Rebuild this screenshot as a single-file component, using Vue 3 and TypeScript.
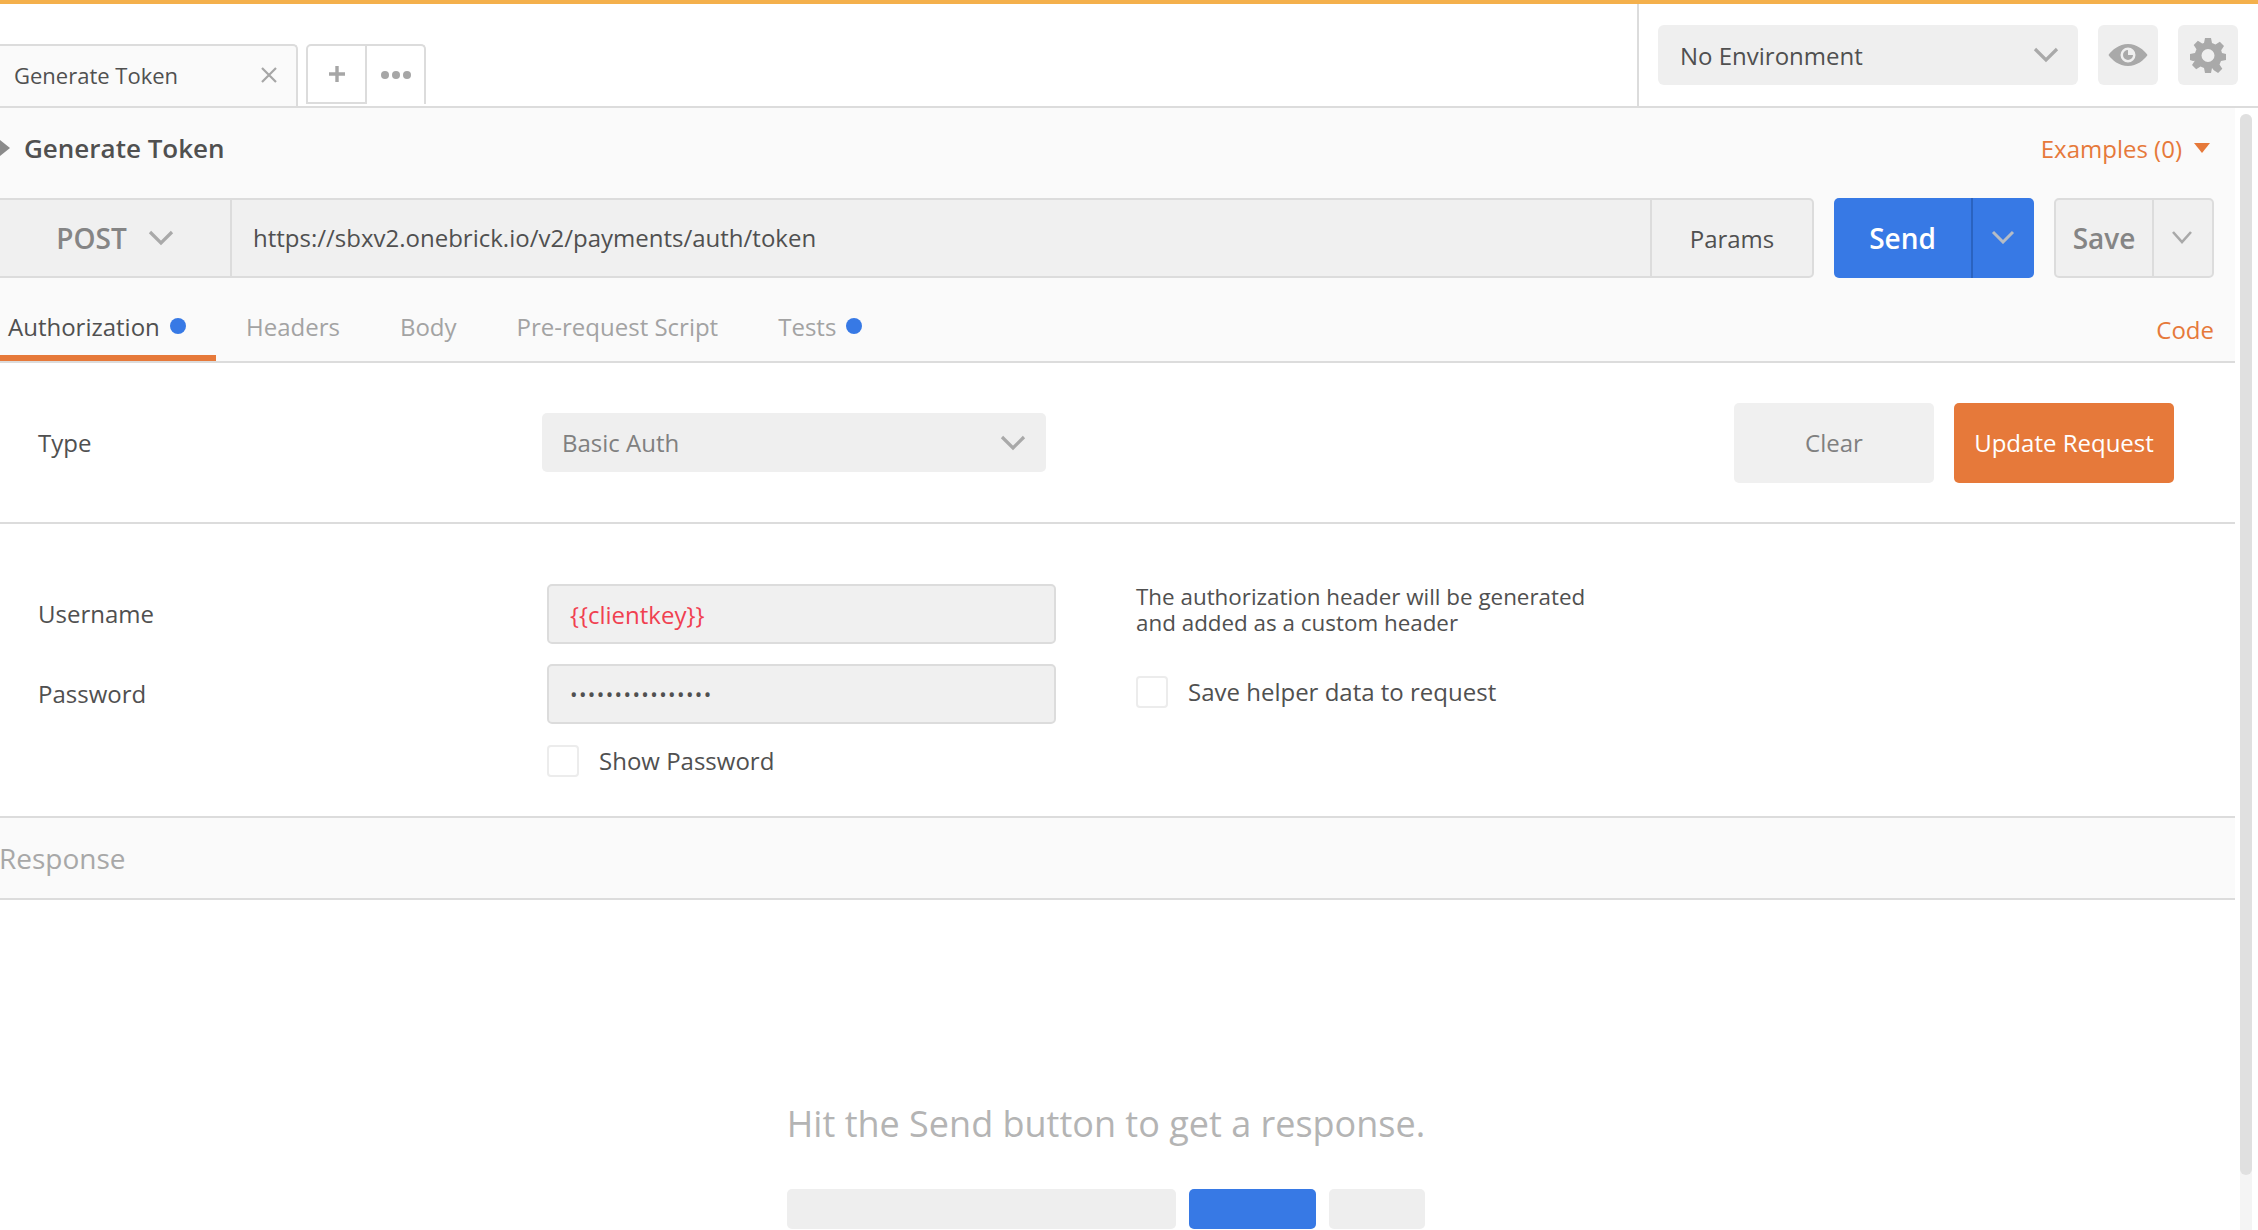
<script setup lang="ts">
const tabs = [
  { label: 'Authorization', dot: true, active: true },
  { label: 'Headers', dot: false, active: false },
  { label: 'Body', dot: false, active: false },
  { label: 'Pre-request Script', dot: false, active: false },
  { label: 'Tests', dot: true, active: false },
]
</script>

<template>
  <div class="app">
    <header class="header">
      <div class="tabstrip">
        <div class="tab">
          <span>Generate Token</span>
          <svg class="x" width="18" height="18" viewBox="0 0 18 18"><path d="M2 2l14 14M16 2L2 16" stroke="#a6a6a6" stroke-width="2.2" fill="none" /></svg>
        </div>
        <div class="tabbtns">
          <button class="tabbtn plus">
            <svg width="18" height="18" viewBox="0 0 18 18"><path d="M9 1v16M1 9h16" stroke="#a6a6a6" stroke-width="3.4" fill="none" /></svg>
          </button>
          <button class="tabbtn">
            <svg width="32" height="10" viewBox="0 0 32 10"><circle cx="5" cy="5" r="4" fill="#a6a6a6" /><circle cx="16" cy="5" r="4" fill="#a6a6a6" /><circle cx="27" cy="5" r="4" fill="#a6a6a6" /></svg>
          </button>
        </div>
      </div>
      <div class="envbar">
        <div class="env">
          <span>No Environment</span>
          <svg width="26" height="16" viewBox="0 0 26 16"><path d="M2 2l11 11L24 2" stroke="#a9a9a9" stroke-width="3.2" fill="none" /></svg>
        </div>
        <div class="iconbtn">
          <svg width="40" height="24" viewBox="0 0 40 24">
            <path fill-rule="evenodd" fill="#a9a9a9" d="M20 1C11 1 4 7 0.5 12 4 17 11 23 20 23s16-6 19.500-11C36 7 29 1 20 1zm0 3.500a7.500 7.500 0 1 1 0 15 7.500 7.500 0 0 1 0-15z" />
            <path fill-rule="evenodd" fill="#a9a9a9" d="M20 7a5 5 0 1 0 5 5h-5z" />
          </svg>
        </div>
        <div class="iconbtn">
          <svg width="36" height="36" viewBox="0 0 36 36">
            <path fill="#a9a9a9" fill-rule="evenodd" d="M15 1h6l1 5 3.500 1.500 4.300-2.800 4.200 4.200-2.800 4.300L32 16l4 1v6l-5 1-1.500 3.500 2.800 4.300-4.200 4.200-4.300-2.800L22 31l-1 5h-6l-1-5-3.500-1.500-4.300 2.800-4.200-4.200 2.800-4.300L3 24l-3-1v-6l5-1 1.500-3.800-2.800-4.300 4.200-4.200 4.300 2.800L14 6zM18 12a6.500 6.500 0 1 0 0 13 6.500 6.500 0 0 0 0-13z" />
          </svg>
        </div>
      </div>
    </header>

    <div class="body">
      <main class="content">
        <section class="request">
          <div class="namerow">
            <div class="name">
              <svg width="10" height="16" viewBox="0 0 10 16"><path d="M0 0l10 8-10 8z" fill="#8a8a8a" /></svg>
              <span>Generate Token</span>
            </div>
            <div class="examples">
              <span>Examples (0)</span>
              <svg width="16" height="10" viewBox="0 0 16 10"><path d="M0 0h16L8 10z" fill="#e6793a" /></svg>
            </div>
          </div>

          <div class="urlrow">
            <div class="urlgroup">
              <div class="method">
                <span>POST</span>
                <svg width="26" height="16" viewBox="0 0 26 16"><path d="M2 2l11 11L24 2" stroke="#a9a9a9" stroke-width="3.2" fill="none" /></svg>
              </div>
              <div class="url">https://sbxv2.onebrick.io/v2/payments/auth/token</div>
              <div class="params">Params</div>
            </div>
            <div class="send">
              <span class="sendmain">Send</span>
              <span class="sendcaret">
                <svg width="24" height="14" viewBox="0 0 24 14"><path d="M2 2l10 10L22 2" stroke="#b5bcc6" stroke-width="3" fill="none" /></svg>
              </span>
            </div>
            <div class="save">
              <span class="savemain">Save</span>
              <span class="savecaret">
                <svg width="22" height="14" viewBox="0 0 22 14"><path d="M2 2l9 10 9-10" stroke="#a9a9a9" stroke-width="2.600" fill="none" /></svg>
              </span>
            </div>
          </div>

          <nav class="reqtabs">
            <div v-for="t in tabs" :key="t.label" class="reqtab" :class="{ active: t.active }">
              <span>{{ t.label }}</span>
              <i v-if="t.dot" class="dot"></i>
            </div>
            <div class="code">Code</div>
          </nav>
        </section>

        <section class="typerow">
          <div class="label">Type</div>
          <div class="typeselect">
            <span>Basic Auth</span>
            <svg width="26" height="16" viewBox="0 0 26 16"><path d="M2 2l11 11L24 2" stroke="#a9a9a9" stroke-width="3.2" fill="none" /></svg>
          </div>
          <div class="actions">
            <div class="clear">Clear</div>
            <div class="update">Update Request</div>
          </div>
        </section>

        <section class="authform">
          <div class="labels">
            <div class="label fieldlabel">Username</div>
            <div class="label fieldlabel">Password</div>
          </div>
          <div class="fields">
            <div class="input var">{{ '\u007B\u007Bclientkey\u007D\u007D' }}</div>
            <div class="input pass">••••••••••••••••</div>
            <div class="check"><i class="box"></i><span>Show Password</span></div>
          </div>
          <div class="helper">
            <p>The authorization header will be generated<br />and added as a custom header</p>
            <div class="check"><i class="box"></i><span>Save helper data to request</span></div>
          </div>
        </section>

        <section class="resphead"><span>Response</span></section>

        <section class="respbody">
          <div class="hint">Hit the Send button to get a response.</div>
          <div class="skeleton">
            <i class="sk a"></i>
            <i class="sk b"></i>
            <i class="sk c"></i>
          </div>
        </section>
      </main>
      <aside class="gutter"><div class="track"><div class="thumb"></div></div></aside>
    </div>
  </div>
</template>

<style>
html, body { margin: 0; background: #fff; }
</style>

<style scoped>
.app {
  width: 2258px;
  height: 1230px;
  overflow: hidden;
  box-sizing: border-box;
  border-top: 4px solid #f4b04c;
  background: #fff;
  font-family: "Open Sans", "Liberation Sans", sans-serif;
  color: #505050;
  display: flex;
  flex-direction: column;
}
.header {
  height: 104px;
  box-sizing: border-box;
  border-bottom: 2px solid #dcdcdc;
  display: flex;
  flex: none;
}
.tabstrip {
  width: 1637px;
  flex: none;
  display: flex;
  align-items: flex-start;
  padding-top: 40px;
  box-sizing: border-box;
}
.tab {
  width: 298px;
  height: 62px;
  box-sizing: border-box;
  border: 2px solid #dcdcdc;
  border-left: 0;
  border-bottom: 0;
  border-radius: 0 5px 0 0;
  background: #fafafa;
  display: flex;
  align-items: center;
  justify-content: space-between;
  padding: 0 18px 2px 14px;
  font-size: 22px;
}
.tabbtns {
  margin-left: 8px;
  display: flex;
  height: 60px;
}
.tabbtn {
  box-sizing: border-box;
  width: 59px;
  height: 60px;
  padding: 0;
  background: #fff;
  border: 2px solid #dcdcdc;
  border-bottom: 0;
  border-left: 0;
  border-radius: 0 5px 0 0;
  display: flex;
  align-items: center;
  justify-content: center;
}
.tabbtn.plus {
  width: 61px;
  border-left: 2px solid #dcdcdc;
  border-bottom: 2px solid #dcdcdc;
  border-radius: 5px 0 0 0;
}
.envbar {
  flex: 1;
  border-left: 2px solid #dcdcdc;
  display: flex;
  gap: 20px;
  padding: 21px 0 0 19px;
  box-sizing: border-box;
}
.env {
  width: 420px;
  height: 60px;
  box-sizing: border-box;
  background: #efefef;
  border-radius: 6px;
  display: flex;
  align-items: center;
  justify-content: space-between;
  padding: 0 19px 0 22px;
  font-size: 24px;
}
.iconbtn {
  width: 60px;
  height: 60px;
  background: #efefef;
  border-radius: 6px;
  display: flex;
  align-items: center;
  justify-content: center;
}
.body {
  flex: 1;
  display: flex;
  min-height: 0;
}
.content {
  width: 2235px;
  flex: none;
  display: flex;
  flex-direction: column;
}
.gutter {
  flex: 1;
  padding: 6px 6px 0 5px;
  display: flex;
}
.track {
  flex: 1;
  background: #f4f4f4;
  border-radius: 6px 6px 0 0;
}
.thumb {
  background: #e0e0e0;
  border-radius: 6px;
  height: 1061px;
}
.request {
  background: #fafafa;
  border-bottom: 2px solid #dcdcdc;
  flex: none;
}
.namerow {
  height: 90px;
  box-sizing: border-box;
  padding: 0 25px 10px 0;
  display: flex;
  align-items: center;
  justify-content: space-between;
}
.name {
  display: flex;
  align-items: center;
  gap: 14px;
  font-size: 26px;
  font-weight: 600;
  color: #505050;
}
.examples {
  display: flex;
  align-items: center;
  gap: 12px;
  color: #e6793a;
  font-size: 24px;
}
.urlrow {
  display: flex;
  height: 80px;
  padding-right: 21px;
}
.urlgroup {
  flex: 1;
  display: flex;
  box-sizing: border-box;
  border: 2px solid #dcdcdc;
  border-left: 0;
  border-radius: 0 5px 5px 0;
  background: #f0f0f0;
  margin-right: 20px;
}
.method {
  width: 232px;
  box-sizing: border-box;
  border-right: 2px solid #dcdcdc;
  display: flex;
  align-items: center;
  justify-content: center;
  gap: 21px;
  font-size: 28px;
  font-weight: 600;
  color: #858585;
}
.url {
  flex: 1;
  display: flex;
  align-items: center;
  padding: 0 0 2px 21px;
  font-size: 24px;
}
.params {
  width: 162px;
  box-sizing: border-box;
  border-left: 2px solid #dcdcdc;
  display: flex;
  align-items: center;
  justify-content: center;
  font-size: 24px;
}
.send {
  width: 200px;
  display: flex;
  background: #3779e5;
  border-radius: 5px;
  color: #fff;
  font-size: 28px;
  font-weight: 600;
  margin-right: 20px;
}
.sendmain {
  width: 139px;
  display: flex;
  align-items: center;
  justify-content: center;
  box-sizing: border-box;
  border-right: 2px solid #2a63c0;
}
.sendcaret {
  flex: 1;
  display: flex;
  align-items: center;
  justify-content: center;
  padding: 0 2px 2px 0;
}
.save {
  width: 160px;
  box-sizing: border-box;
  display: flex;
  border: 2px solid #dcdcdc;
  border-radius: 5px;
  background: #f0f0f0;
  color: #858585;
  font-size: 28px;
  font-weight: 600;
}
.savemain {
  width: 98px;
  box-sizing: border-box;
  border-right: 2px solid #dcdcdc;
  display: flex;
  align-items: center;
  justify-content: center;
}
.savecaret {
  flex: 1;
  display: flex;
  align-items: center;
  justify-content: center;
  padding: 0 2px 2px 0;
}
.reqtabs {
  height: 83px;
  display: flex;
  align-items: stretch;
  gap: 60px;
  padding-right: 21px;
}
.reqtab {
  display: flex;
  align-items: center;
  gap: 10px;
  font-size: 24px;
  color: #a3a3a3;
  padding: 19px 0 6px;
  box-sizing: border-box;
}
.reqtab.active {
  color: #505050;
  width: 216px;
  margin-right: -30px;
  padding: 19px 0 0 8px;
  border-bottom: 6px solid #e6793a;
}
.dot {
  width: 16px;
  height: 16px;
  border-radius: 50%;
  background: #3779e5;
  display: block;
}
.code {
  margin-left: auto;
  color: #e6793a;
  font-size: 24px;
  padding-top: 19px;
  display: flex;
  align-items: center;
}
.typerow {
  height: 161px;
  box-sizing: border-box;
  border-bottom: 2px solid #dcdcdc;
  display: flex;
  align-items: center;
  padding: 0 60px 0 38px;
  flex: none;
}
.label {
  font-size: 24px;
  color: #505050;
}
.typerow .label {
  width: 504px;
}
.typeselect {
  width: 504px;
  height: 59px;
  background: #efefef;
  border-radius: 5px;
  display: flex;
  align-items: center;
  justify-content: space-between;
  padding: 0 20px;
  box-sizing: border-box;
  font-size: 24px;
  color: #808080;
}
.actions {
  margin-left: auto;
  display: flex;
  gap: 20px;
  margin-right: 1px;
}
.clear, .update {
  height: 80px;
  border-radius: 5px;
  display: flex;
  align-items: center;
  justify-content: center;
  font-size: 24px;
}
.clear {
  width: 200px;
  background: #f0f0f0;
  color: #808080;
}
.update {
  width: 220px;
  background: #e6793a;
  color: #fff;
}
.authform {
  height: 294px;
  box-sizing: border-box;
  padding: 60px 0 0 38px;
  border-bottom: 2px solid #dcdcdc;
  display: flex;
  flex: none;
}
.labels {
  width: 509px;
  display: flex;
  flex-direction: column;
}
.fieldlabel {
  height: 60px;
  line-height: 60px;
  margin-bottom: 20px;
}
.fields {
  width: 509px;
  display: flex;
  flex-direction: column;
  gap: 20px;
}
.input {
  height: 60px;
  box-sizing: border-box;
  border: 2px solid #dcdcdc;
  border-radius: 5px;
  background: #f0f0f0;
  display: flex;
  align-items: center;
  padding-left: 21px;
  font-size: 24px;
}
.var { color: #f04050; }
.pass {
  font-size: 20px;
  letter-spacing: 1.4px;
  color: #505050;
}
.check {
  display: flex;
  align-items: center;
  gap: 20px;
  font-size: 24px;
}
.box {
  display: block;
  width: 32px;
  height: 32px;
  box-sizing: border-box;
  border: 2px solid #ececec;
  border-radius: 4px;
  background: #fff;
}
.helper {
  margin-left: 80px;
}
.helper p {
  margin: 0 0 39px;
  font-size: 22.400px;
  line-height: 26px;
}
.resphead {
  height: 82px;
  box-sizing: border-box;
  background: #fafafa;
  border-bottom: 2px solid #dcdcdc;
  display: flex;
  align-items: center;
  font-size: 28px;
  color: #a8a8a8;
  flex: none;
}
.resphead span { margin-left: -1px; }
.respbody {
  flex: 1;
  display: flex;
  flex-direction: column;
  align-items: center;
  padding: 198px 23px 0 0;
}
.hint {
  font-size: 36px;
  color: #b4b4b4;
  line-height: 52px;
}
.skeleton {
  margin-top: 39px;
  display: flex;
  gap: 13px;
}
.sk {
  display: block;
  height: 40px;
  border-radius: 5px;
  background: #eeeeee;
}
.sk.a { width: 389px; }
.sk.b { width: 127px; background: #3779e5; }
.sk.c { width: 96px; }
</style>
